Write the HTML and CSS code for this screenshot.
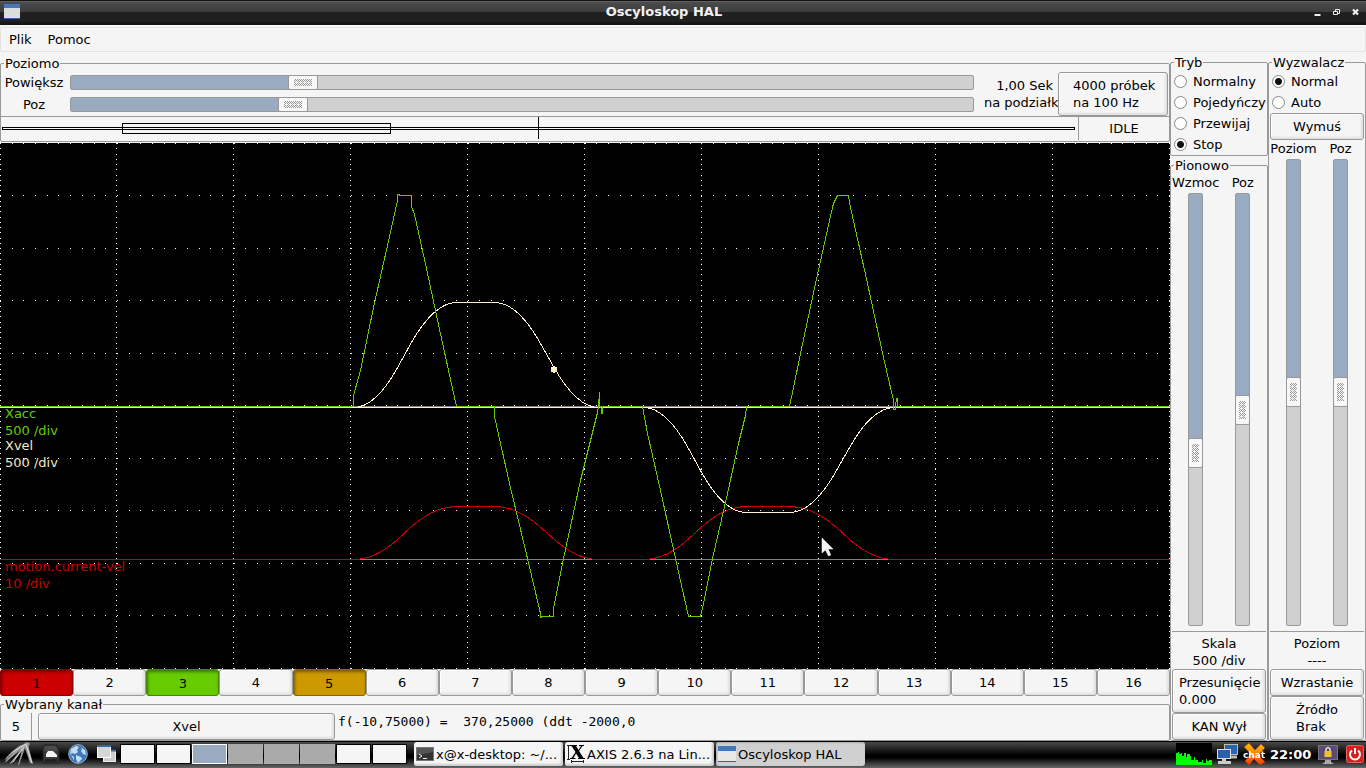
FILE: index.html
```html
<!DOCTYPE html>
<html lang="pl">
<head>
<meta charset="utf-8">
<title>Oscyloskop HAL</title>
<link rel="stylesheet" href="styles.css">
</head>
<body>
<header class="titlebar">
  <svg class="app-icon" width="18" height="17" viewBox="0 0 18 17"><rect x="1" y="1" width="16" height="15" fill="#dcdcdc"/><rect x="1" y="1" width="16" height="4" fill="#4378bf"/><path d="M1 15.500h16" stroke="#3465a4"/></svg>
  <h1 class="title">Oscyloskop HAL</h1>
  <div class="window-buttons">
    <button aria-label="Minimalizuj"><svg width="7" height="8" viewBox="0 0 7 8"><path d="M0.500 7h6" stroke="#eee" stroke-width="2"/></svg></button>
    <button aria-label="Przywróć"><svg width="7" height="8" viewBox="0 0 7 8"><path d="M2.500 3V1.500h4v4H5M0.500 3.500h4v3h-4z" fill="none" stroke="#eee"/></svg></button>
    <button aria-label="Zamknij"><svg width="7" height="8" viewBox="0 0 7 8"><path d="M1 1.500l5 5M6 1.500l-5 5" stroke="#eee" stroke-width="2.200"/></svg></button>
  </div>
</header>

<nav class="menubar">
  <button>Plik</button>
  <button>Pomoc</button>
</nav>

<main class="workspace">
  <section class="scope">
    <fieldset class="frame horizontal">
      <legend>Poziomo</legend>
      <div class="horizontal-controls">
        <div class="slider-rows">
          <label for="zoom">Powiększ</label>
          <input id="zoom" class="slider" type="range" min="0" max="1000" value="249" style="--v:.249">
          <label for="hpos">Poz</label>
          <input id="hpos" class="slider" type="range" min="0" max="1000" value="237" style="--v:.237">
        </div>
        <p class="time-scale">1,00 Sek<br>na podziałk</p>
        <button class="btn two-line samples">4000 próbek<br>na 100 Hz</button>
      </div>
      <div class="record">
        <svg class="record-view" viewBox="0 0 1077 22" preserveAspectRatio="none" shape-rendering="crispEdges">
          <path d="M1.500 10.500h1072v2h-1072zM121.500 6.500h268v10h-268zM537.500 0v22" fill="none" stroke="#000"/>
        </svg>
        <output class="state">IDLE</output>
      </div>
    </fieldset>

    <div class="display">
      <svg class="plot" viewBox="0 143 1170 526" preserveAspectRatio="none" shape-rendering="crispEdges" fill="none">
        <rect y="143" width="1170" height="526" fill="#000"/>
        <path class="grid-rows" d="M0 143.500H1170M0 195.500H1170M0 248.500H1170M0 300.500H1170M0 353.500H1170M0 405.500H1170M0 458.500H1170M0 510.500H1170M0 563.500H1170M0 615.500H1170M0 668.500H1170"/>
        <path class="grid-cols" d="M.5 143V669M116.500 143V669M233.500 143V669M350.500 143V669M467.500 143V669M584.500 143V669M701.500 143V669M818.500 143V669M935.500 143V669M1052.500 143V669M1169.500 143V669"/>
        <g transform="translate(.5 .5)">
          <path d="M-1 406H1170M-1 559H1170" stroke="#808080"/>
          <path class="trace-vel" d="M-1 559H353Q375 559 397 539L411 526Q434 506 456 506H494Q517 506 540 526.700L553 538.300Q576 559 598 559H643Q665.500 559 688 538.500L700 527.500Q723 506 746 506H789Q812.500 506 836 527L848 538Q871 559 894 559H1170"/>
          <path class="trace-xvel" d="M-1 407H353Q375 407 397 367.200L411 341.800Q434 302 456 302H494Q517 302 540 343L553 366Q576 407 598 407H643Q665.500 407 688 448L700 470Q723 512 746 512H789Q812.500 512 836 470L848 449Q871 407 894 407H1170M353 407H894"/>
          <path class="trace-xacc" d="M-1 406H353V395L360 370L373 307L387 245L397 200V194H399V195H411V206L414 214L426 268L441 338L456 406H494V416L509 483L527 558L540 613V617H541V616H553V608L563 558L580 480L597 412L598 406L599 392V406L601 408V413H602V406H642L647 433L660 490L675 558L688 616H700L702 608L712 558L727 493L738 443L745 415L746 406H789L792 392L800 353L815 283L829 220L833 203L837 195H848L850 207L867 283L883 357L893 400V409H895V406L896 398H897V406H1170"/>
        </g>
        <circle cx="554" cy="369.500" r="3.200" fill="#fff0d0"/>
        <path d="M822 538v15l3.500-3 3 6 2.300-1-2.600-6h4.800z" fill="#f4f4f4" stroke="#fff" stroke-width=".5" shape-rendering="auto"/>
      </svg>
      <p class="trace-label label-xacc">Xacc<br>500 /div</p>
      <p class="trace-label label-xvel">Xvel<br>500 /div</p>
      <p class="trace-label label-vel">motion.current-vel<br>10 /div</p>
    </div>

    <div class="channels">
      <button class="btn on red">1</button><button class="btn">2</button><button class="btn on green">3</button><button class="btn">4</button><button class="btn on amber">5</button><button class="btn">6</button><button class="btn">7</button><button class="btn">8</button><button class="btn">9</button><button class="btn">10</button><button class="btn">11</button><button class="btn">12</button><button class="btn">13</button><button class="btn">14</button><button class="btn">15</button><button class="btn">16</button>
    </div>

    <fieldset class="frame selected">
      <legend>Wybrany kanał</legend>
      <div class="selected-row">
        <output class="channel-number">5</output>
        <button class="btn source-name">Xvel</button>
        <output class="readout">f(-10,75000) =  370,25000 (ddt -2000,0</output>
      </div>
    </fieldset>
  </section>

  <section class="side">
    <fieldset class="frame mode">
      <legend>Tryb</legend>
      <label class="radio"><input type="radio" name="mode">Normalny</label>
      <label class="radio"><input type="radio" name="mode">Pojedyńczy</label>
      <label class="radio"><input type="radio" name="mode">Przewijaj</label>
      <label class="radio"><input type="radio" name="mode" checked>Stop</label>
    </fieldset>
    <fieldset class="frame fill">
      <legend>Pionowo</legend>
      <div class="vsliders">
        <div class="vslider"><label for="gain">Wzmoc</label><input id="gain" class="slider vertical" type="range" min="0" max="1000" value="608" style="--v:.608"></div>
        <div class="vslider"><label for="vpos">Poz</label><input id="vpos" class="slider vertical" type="range" min="0" max="1000" value="502" style="--v:.502"></div>
      </div>
      <p class="value">Skala<br>500 /div</p>
      <button class="btn two-line">Przesunięcie<br>0.000</button>
      <button class="btn">KAN Wył</button>
    </fieldset>
  </section>

  <section class="side">
    <fieldset class="frame fill trigger">
      <legend>Wyzwalacz</legend>
      <label class="radio"><input type="radio" name="trigger" checked>Normal</label>
      <label class="radio"><input type="radio" name="trigger">Auto</label>
      <button class="btn force">Wymuś</button>
      <div class="vsliders">
        <div class="vslider"><label for="level">Poziom</label><input id="level" class="slider vertical" type="range" min="0" max="1000" value="499" style="--v:.499"></div>
        <div class="vslider"><label for="tpos">Poz</label><input id="tpos" class="slider vertical" type="range" min="0" max="1000" value="499" style="--v:.499"></div>
      </div>
      <p class="value">Poziom<br>----</p>
      <button class="btn">Wzrastanie</button>
      <button class="btn two-line"><span>Źródło<br>Brak</span></button>
    </fieldset>
  </section>
</main>

<footer class="taskbar">
  <div class="launchers">
    <button aria-label="Menu"><svg width="30" height="24" viewBox="0 0 30 24"><path d="M0 18C6 11 12 5 19 2.500L23 0l3 1.500-1.500 3L29 22l-3-1L21 6l-1.500 4-4.500 13-1-.5 4-14L7 22l-1-1L16.500 8 2 20l-1-.5L12 8z" fill="#9c9c9c"/><path d="M2 17.500C9 10 14 5.500 22 2.500L28 21M20 5L9 20" stroke="#e4e4e4" fill="none"/></svg></button>
    <button aria-label="Menedżer plików"><svg width="18" height="22" viewBox="0 0 18 22"><path d="M2 2h13l2 6v12H1V8z" fill="#383838" stroke="#222"/><path d="M3 3h11l2 5H1z" fill="#4a4a4a"/><path d="M4 14v-3l2-3h5l4 4v2z" fill="#f4f4f4"/><rect x="3" y="16" width="12" height="3" fill="#222"/></svg></button>
    <button aria-label="Przeglądarka"><svg width="20" height="22" viewBox="0 0 20 22"><circle cx="10" cy="11" r="9.300" fill="#3f78b8" stroke="#8fb3d9"/><path d="M3 6l5-3 3 1-2 3 1 2-3 2-3-1-2 2zM12 4l5 3 1 5-3-1-2-3 1-2zM8 12l5 2 1 2-4 4-2-4zM3 12l3 2v3z" fill="#c4dcf0"/></svg></button>
    <button aria-label="Pokaż pulpit"><svg width="20" height="20" viewBox="0 0 20 20"><rect x="7.500" y="6.500" width="12" height="11" fill="#ccc" stroke="#eee"/><path d="M7 6.500h13" stroke="#3465a4" stroke-width="2"/><rect x="1.500" y="2.500" width="13" height="11" fill="#d6d6d6" stroke="#fff"/><path d="M1 2h14" stroke="#3465a4" stroke-width="2"/></svg></button>
  </div>
  <div class="pager">
    <button aria-label="Pulpit 1" class="used"></button><button aria-label="Pulpit 2" class="used"></button><button aria-label="Pulpit 3" class="current"></button><button aria-label="Pulpit 4"></button><button aria-label="Pulpit 5"></button><button aria-label="Pulpit 6"></button><button aria-label="Pulpit 7" class="used"></button><button aria-label="Pulpit 8" class="used"></button>
  </div>
  <div class="tasks">
    <button class="task"><svg width="18" height="16" viewBox="0 0 18 16"><rect x=".5" y="1.500" width="17" height="13" fill="#333" stroke="#777"/><path d="M1 2h16v4L1 9z" fill="#555"/><path d="M3 8l3 2-3 2M7 12.500h4" fill="none" stroke="#eee"/></svg>x@x-desktop: ~/...</button>
    <button class="task"><svg width="18" height="18" viewBox="0 0 18 18"><path d="M1.500 0v14M0 .5h3M0 14.500h3M4 16.500h13M4.500 15v3M16.500 15v3" stroke="#222" fill="none"/><path d="M3 0h7v1H9l2.500 4L14 1h-2V0h5v1h-1.500L12 6l4.500 7H18v1h-7v-1h1L9 8.500 6.500 13h2v1H3v-1h1.500L8.500 7 4.500 1H3z" fill="#000"/></svg>AXIS 2.6.3 na Lin...</button>
    <button class="task active"><svg width="18" height="17" viewBox="0 0 18 17"><rect x="0" y="1" width="18" height="15" fill="#e8e8e8"/><rect x="0" y="0" width="18" height="5" fill="#4378bf"/><path d="M0 15.500h18" stroke="#3465a4"/></svg>Oscyloskop HAL</button>
  </div>
  <div class="tray">
    <svg width="36" height="22" viewBox="0 0 36 22" shape-rendering="crispEdges"><rect width="36" height="22" fill="#000"/><path d="M0 22V10h2V9h1v2h2v-1h1v3h2v-3h2v4h1v-3h3v2h1v4h3v-3h1v3h3v2h4v-2h1v3h3v-4h1v2h2v-1h3v7z" fill="#0f0"/></svg>
    <svg width="23" height="22" viewBox="0 0 23 22"><rect x="8.500" y="1.500" width="13" height="10" fill="#2b65b0" stroke="#bbb"/><path d="M12 14h9" stroke="#bbb" stroke-width="3"/><rect x="1.500" y="6.500" width="13" height="9" fill="#2b5fa8" stroke="#ddd"/><path d="M6 17h4M2 19.500h13" stroke="#ccc" stroke-width="3"/></svg>
    <svg class="chat" width="23" height="22" viewBox="0 0 23 22"><defs><linearGradient id="flame" x2="0" y2="1"><stop stop-color="#ffc400"/><stop offset="1" stop-color="#f03c00"/></linearGradient></defs><path d="M1 4l5-4 6 7 6-6 4 4-7 7 7 7-5 3-6-6-5 6-4-4 6-7z" fill="url(#flame)" stroke="#a33" stroke-width=".5"/><text x="0" y="15" class="chat-text">chat</text></svg>
    <time class="clock">22:00</time>
    <svg width="20" height="21" viewBox="0 0 20 21"><rect x=".5" y="1.500" width="19" height="14" fill="#5c4b75" stroke="#777"/><path d="M7 16h6v2l3 2H4l3-2z" fill="#aaa"/><path d="M8 7V5q2-3 4 0v2" fill="none" stroke="#ddd" stroke-width="1.500"/><rect x="6.500" y="7" width="7" height="6" fill="#edc430"/></svg>
    <button class="power" aria-label="Wyłącz"><svg width="18" height="18" viewBox="0 0 18 18"><rect x=".5" y=".5" width="17" height="17" rx="2" fill="#d61f1f" stroke="#e86060"/><path d="M6 5.500a5 5 0 1 0 6 0M9 3v6" fill="none" stroke="#fff" stroke-width="2"/></svg></button>
  </div>
</footer>
</body>
</html>
```
FILE: styles.css
```css
* { box-sizing: border-box; }

body {
  margin: 0;
  height: 100vh;
  display: flex;
  flex-direction: column;
  overflow: hidden;
  background: #f5f5f5;
  color: #000;
  font: 13px/17px "DejaVu Sans", sans-serif;
}

button {
  font: inherit;
  color: inherit;
  padding: 0;
  border: 0;
  background: none;
}

p { margin: 0; }
svg { display: block; flex: none; }

/* Window title */
.titlebar {
  height: 25px;
  flex: none;
  display: grid;
  grid-template-columns: 22px 1fr 56px;
  align-items: center;
  padding: 0 7px 0 3px;
  border-top: 1px solid #111;
  border-bottom: 3px solid #161616;
  background: linear-gradient(#777 0, #4c4c4c 1px, #3c3c3c 11px, #202020 11px);
}
.title {
  margin: 0;
  color: #f2f2f2;
  font-size: 13px;
  line-height: 17px;
  text-align: center;
}
.window-buttons { display: flex; justify-content: flex-end; gap: 12px; }

.menubar {
  flex: none;
  height: 25px;
  margin-top: 2px;
  padding: 0 8px;
  display: flex;
  align-items: center;
  gap: 16px;
  border: 1px solid #e2e2e2;
  border-radius: 2px;
}

.workspace {
  flex: 1;
  min-height: 0;
  display: grid;
  grid-template-columns: minmax(0, 1fr) 98px 98px;
  padding-top: 3px;
}

/* Titled frames */
.frame {
  min-width: 0;
  margin: 0;
  padding: 0;
  border: 1px solid #999;
  border-radius: 2px;
}
.frame legend {
  padding: 0 1px;
  margin-left: 3px;
  height: 17px;
}

.btn {
  min-height: 27px;
  border: 1px solid #999;
  border-radius: 3px;
  background: #f5f5f5;
  box-shadow: inset -2px -2px 2px #e0e0e0, inset 1px 1px 0 #fff;
}
.two-line { min-height: 44px; text-align: left; padding: 0 6px; }

/* Left side */
.scope { display: flex; flex-direction: column; min-height: 0; }
.horizontal { flex: none; height: 87px; margin-bottom: 1px; }
.horizontal-controls {
  display: grid;
  grid-template-columns: minmax(0, 1fr) 69px 115px;
  height: 44px;
  padding-right: 1px;
}
.slider-rows {
  display: grid;
  grid-template-columns: 66px minmax(0, 1fr);
  grid-auto-rows: 15px;
  gap: 7px 3px;
  align-content: start;
  padding: 3px 10px 0 0;
}
.slider-rows label { text-align: center; line-height: 15px; white-space: nowrap; }
.time-scale { padding-top: 5px; text-align: right; white-space: nowrap; }
.samples { margin-left: 5px; padding-left: 14px; }

.record {
  display: grid;
  grid-template-columns: minmax(0, 1fr) 91px;
  height: 25px;
  border-top: 1px solid #999;
}
.record-view { width: 100%; height: 22px; }
.state {
  height: 23px;
  border-left: 1px solid #999;
  text-align: center;
  line-height: 23px;
}

.display { position: relative; flex: 1; min-height: 0; background: #000; }
.plot { position: absolute; inset: 0; width: 100%; height: 100%; }
.grid-rows { stroke: #fff; stroke-dasharray: 1 10.69; }
.grid-cols { stroke: #fff; stroke-dasharray: 1 4.25; }
.trace-vel { stroke: #c00; }
.trace-xacc { stroke: #6c0; }
.trace-xvel { stroke: #fff0d0; }

/* Labels hang from their trace's zero line */
.trace-label { position: absolute; left: 5px; }
.label-xacc { top: calc(50% - 1px); color: #6c0; }
.label-xvel { top: calc(50% + 31px); color: #f3e6c8; }
.label-vel { top: calc(50% + 152px); color: #c00; }

.channels {
  flex: none;
  display: grid;
  grid-template-columns: repeat(16, minmax(0, 1fr));
}
.channels .on { box-shadow: inset 1px 2px 3px rgba(0, 0, 0, .4); padding-top: 2px; }
.channels .red { background: #c00; border-color: #800; }
.channels .green { background: #6c0; border-color: #480; }
.channels .amber { background: #c90; border-color: #860; }

.selected { flex: none; height: 45px; }
.selected-row { display: flex; height: 27px; }
.channel-number {
  width: 31px;
  border-right: 1px solid #999;
  text-align: center;
  line-height: 27px;
}
.source-name { width: 297px; margin: 0 3px 0 6px; }
.readout {
  white-space: pre;
  font-family: "DejaVu Sans Mono", monospace;
}

/* Sliders */
.slider {
  --fill: calc(15px + (100% - 30px) * var(--v));
  --grip: url("data:image/svg+xml,%3Csvg xmlns='http://www.w3.org/2000/svg' width='4' height='4' shape-rendering='crispEdges'%3E%3Cpath d='M1 .5h1M0 1.500h1M2 1.500h1M1 2.500h1M3 2.500h1M3 .5h1M0 3.500h1' stroke='%23999'/%3E%3C/svg%3E");
  appearance: none;
  width: 100%;
  height: 15px;
  margin: 0;
  border: 1px solid #999;
  border-radius: 2px;
  background: linear-gradient(to right, #98abc1 var(--fill), #d0d0d0 var(--fill));
}
.slider::-webkit-slider-thumb {
  appearance: none;
  box-sizing: border-box;
  width: 30px;
  height: 15px;
  padding: 3px 5px;
  border: 1px solid #999;
  border-radius: 2px;
  background: var(--grip) content-box, linear-gradient(#f8f8f8, #f8f8f8) border-box;
}
.slider.vertical {
  writing-mode: vertical-lr;
  width: 15px;
  height: auto;
  flex: 1;
  min-height: 0;
  background: linear-gradient(to bottom, #98abc1 var(--fill), #d0d0d0 var(--fill));
}
.slider.vertical::-webkit-slider-thumb { width: 15px; height: 30px; padding: 5px 3px; }

/* Right side */
.side { display: flex; flex-direction: column; min-height: 0; }
.side .frame { margin-top: -1px; }
.side .mode { flex: none; height: 102px; margin-bottom: 2px; }
.fill { flex: 1; min-height: 0; display: flex; flex-direction: column; }
.radio { display: flex; align-items: center; height: 21px; gap: 6px; padding-left: 3px; white-space: nowrap; }
.radio input {
  appearance: none;
  flex: none;
  width: 13px;
  height: 13px;
  margin: 0;
  border: 1px solid #888;
  border-radius: 50%;
  background: #fff;
}
.radio input:checked { background: radial-gradient(circle, #111 0 3px, #fff 4px); }
.force { margin: 0 1px; }
.vsliders {
  flex: 1;
  min-height: 0;
  display: grid;
  grid-template-columns: 1fr 1fr;
  margin: 0 1px;
  padding-bottom: 5px;
  border-bottom: 1px solid #999;
}
.vslider { display: flex; flex-direction: column; align-items: center; min-height: 0; gap: 2px; }
.value { text-align: center; padding: 3px 0 0; }
.fill > .btn { flex: none; margin: 0 1px; }
.trigger > .two-line { text-align: center; }
.trigger > .two-line span { display: inline-block; text-align: left; }

/* Desktop panel */
.taskbar {
  flex: none;
  height: 27px;
  display: flex;
  align-items: center;
  border-top: 1px solid #000;
  padding-bottom: 2px;
  background: linear-gradient(#4a4a4a, #000 50%, #000 60%, #666);
}
.launchers { display: flex; align-items: center; gap: 8px; width: 120px; padding-left: 4px; }
.pager { display: flex; gap: 1px; width: 294px; }
.pager button { width: 35px; height: 20px; background: #aaa; }
.pager .used { background: #f5f5f5; border: 1px solid #000; }
.pager .current { background: #98abc1; border: 1px solid #fff; }
.tasks { display: flex; gap: 2px; }
.task {
  width: 149px;
  height: 24px;
  display: flex;
  align-items: center;
  gap: 2px;
  padding-left: 2px;
  border-radius: 3px;
  white-space: nowrap;
  background: #f5f5f5;
  box-shadow: inset -2px -2px 2px #ccc;
}
.task.active { background: #d0d0d0; box-shadow: inset 1px 1px 2px #aaa; }
.tray { display: flex; align-items: center; gap: 4px; margin-left: auto; padding-right: 2px; }
.clock { width: 44px; color: #fff; font-weight: bold; }
.power { margin-left: 4px; }
.chat { overflow: visible; }
.chat-text { font: bold 9px "DejaVu Sans", sans-serif; fill: #fff; }
```
